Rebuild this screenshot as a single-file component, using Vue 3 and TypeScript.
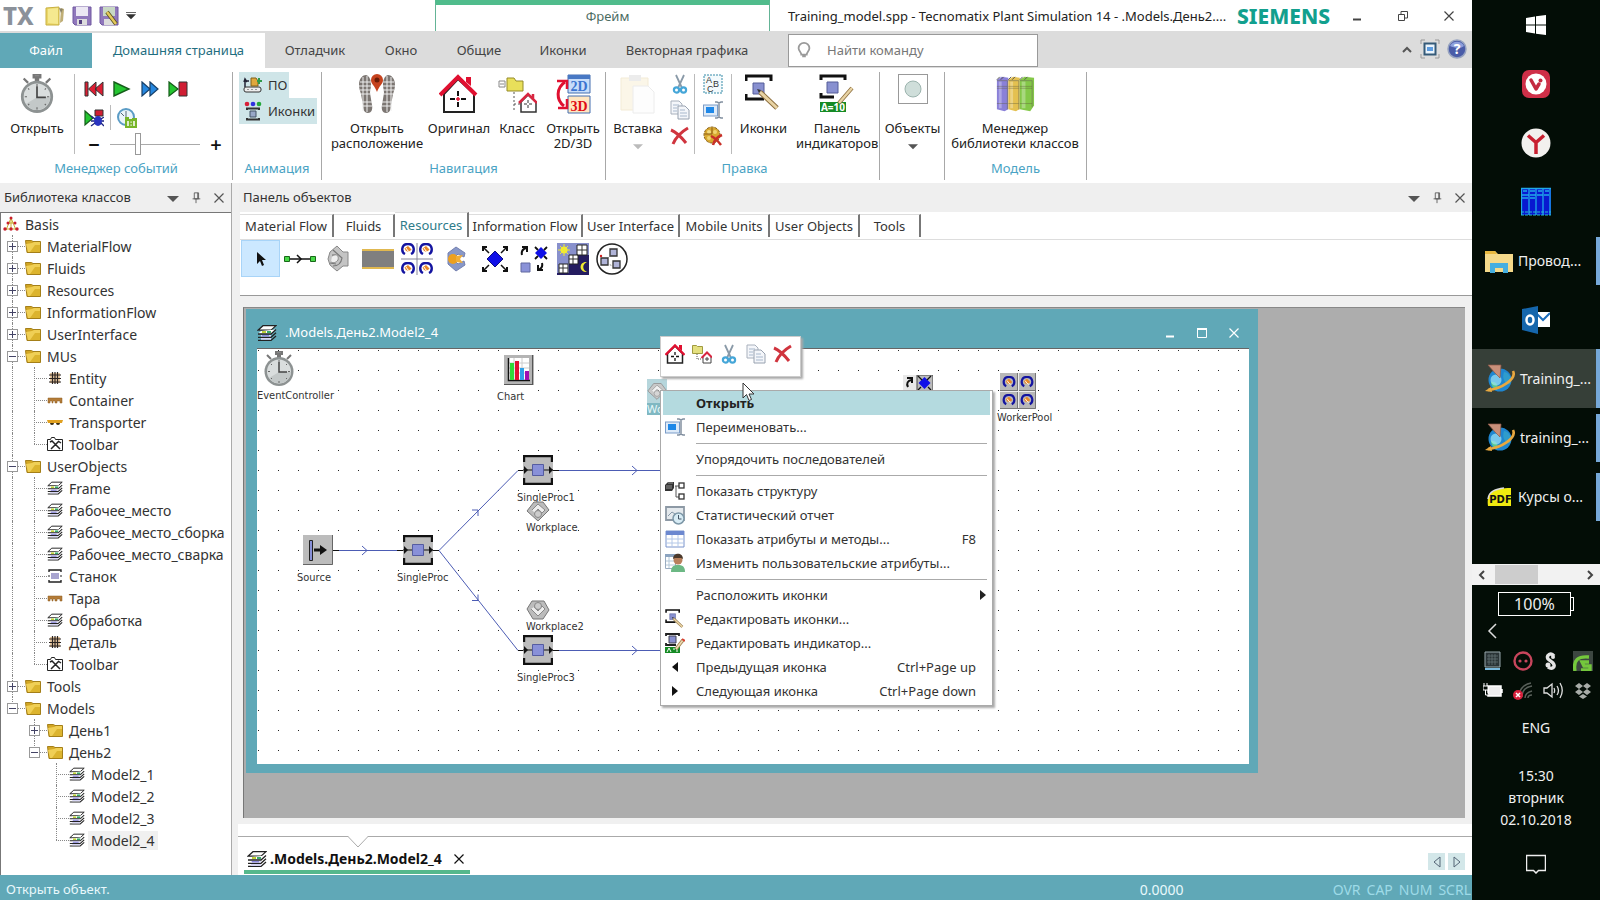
<script setup lang="ts">
import { computed, ref } from 'vue'

interface TreeNode { depth: number; icon: string; label: string; state?: 'open' | 'closed'; selected?: boolean }
interface MenuEntry { label?: string; icon?: string; keys?: string; sub?: boolean; active?: boolean }
interface PlantNode { name: string; icon: string; x: number; y: number; w: number; h: number; lx: number; ly: number }
interface TaskItem { icon: string; size: string; title: string; label?: string; active?: boolean; mark?: boolean }

const ribbonTabs = [
  { label: 'Файл', cls: 'file' },
  { label: 'Домашняя страница', cls: 'home' },
  { label: 'Отладчик', cls: 'w100' },
  { label: 'Окно', cls: 'w72' },
  { label: 'Общие', cls: 'w84' },
  { label: 'Иконки', cls: 'w84' },
  { label: 'Векторная графика', cls: 'w164' },
]

const nodes: TreeNode[] = [
  { depth: 0, icon: 'basis', label: 'Basis' },
  { depth: 1, icon: 'folder', label: 'MaterialFlow', state: 'closed' },
  { depth: 1, icon: 'folder', label: 'Fluids', state: 'closed' },
  { depth: 1, icon: 'folder', label: 'Resources', state: 'closed' },
  { depth: 1, icon: 'folder', label: 'InformationFlow', state: 'closed' },
  { depth: 1, icon: 'folder', label: 'UserInterface', state: 'closed' },
  { depth: 1, icon: 'folder', label: 'MUs', state: 'open' },
  { depth: 2, icon: 'entity', label: 'Entity' },
  { depth: 2, icon: 'container', label: 'Container' },
  { depth: 2, icon: 'transporter', label: 'Transporter' },
  { depth: 2, icon: 'toolbar', label: 'Toolbar' },
  { depth: 1, icon: 'folder', label: 'UserObjects', state: 'open' },
  { depth: 2, icon: 'frame', label: 'Frame' },
  { depth: 2, icon: 'frame', label: 'Рабочее_место' },
  { depth: 2, icon: 'frame', label: 'Рабочее_место_сборка' },
  { depth: 2, icon: 'frame', label: 'Рабочее_место_сварка' },
  { depth: 2, icon: 'station', label: 'Станок' },
  { depth: 2, icon: 'container', label: 'Тара' },
  { depth: 2, icon: 'frame', label: 'Обработка' },
  { depth: 2, icon: 'entity', label: 'Деталь' },
  { depth: 2, icon: 'toolbar', label: 'Toolbar' },
  { depth: 1, icon: 'folder', label: 'Tools', state: 'closed' },
  { depth: 1, icon: 'folder', label: 'Models', state: 'open' },
  { depth: 2, icon: 'folder', label: 'День1', state: 'closed' },
  { depth: 2, icon: 'folder', label: 'День2', state: 'open' },
  { depth: 3, icon: 'frame', label: 'Model2_1' },
  { depth: 3, icon: 'frame', label: 'Model2_2' },
  { depth: 3, icon: 'frame', label: 'Model2_3' },
  { depth: 3, icon: 'frame', label: 'Model2_4', selected: true },
]

// A guide line at a level runs on while a later sibling exists at that level.
function continues(index: number, level: number): boolean {
  for (let i = index + 1; i < nodes.length; i++) {
    if (nodes[i].depth < level) return false
    if (nodes[i].depth === level) return true
  }
  return false
}
const tree = computed(() => nodes.map((n, i) => ({
  ...n,
  cells: Array.from({ length: n.depth }, (_, k) => ({ own: k + 1 === n.depth, through: continues(i, k + 1) })),
})))

const toolTabs = [
  { label: 'Material Flow', cls: 'w94' },
  { label: 'Fluids', cls: 'w60' },
  { label: 'Resources', cls: 'w74 current' },
  { label: 'Information Flow', cls: 'w114' },
  { label: 'User Interface', cls: 'w97' },
  { label: 'Mobile Units', cls: 'w90' },
  { label: 'User Objects', cls: 'w90' },
  { label: 'Tools', cls: 'w60' },
]
const tools = ['pointer', 'connector', 'workplace', 'footpath', 'pool', 'worker', 'exporter', 'transfer', 'shift', 'lockout']

const plant: PlantNode[] = [
  { name: 'EventController', icon: 'watch', x: 6, y: 2, w: 32, h: 36, lx: 0, ly: 40 },
  { name: 'Chart', icon: 'chart', x: 247, y: 6, w: 30, h: 30, lx: 240, ly: 41 },
  { name: 'Source', icon: 'source', x: 46, y: 186, w: 30, h: 30, lx: 40, ly: 222 },
  { name: 'SingleProc', icon: 'proc', x: 146, y: 186, w: 30, h: 30, lx: 140, ly: 222 },
  { name: 'SingleProc1', icon: 'proc', x: 266, y: 106, w: 30, h: 30, lx: 260, ly: 142 },
  { name: 'Workplace', icon: 'wp-down', x: 269, y: 151, w: 24, h: 22, lx: 269, ly: 172 },
  { name: 'Workplace2', icon: 'wp-up', x: 269, y: 250, w: 24, h: 22, lx: 269, ly: 271 },
  { name: 'SingleProc3', icon: 'proc', x: 266, y: 286, w: 30, h: 30, lx: 260, ly: 322 },
  { name: 'WorkerPool', icon: 'poolgray', x: 743, y: 24, w: 36, h: 36, lx: 740, ly: 62 },
]

const menu: MenuEntry[] = [
  { label: 'Открыть', active: true },
  { label: 'Переименовать...', icon: 'rename' },
  {},
  { label: 'Упорядочить последователей' },
  {},
  { label: 'Показать структуру', icon: 'structure' },
  { label: 'Статистический отчет', icon: 'report' },
  { label: 'Показать атрибуты и методы...', icon: 'attrs', keys: 'F8' },
  { label: 'Изменить пользовательские атрибуты...', icon: 'userattrs' },
  {},
  { label: 'Расположить иконки', sub: true },
  { label: 'Редактировать иконки...', icon: 'procpen' },
  { label: 'Редактировать индикатор...', icon: 'panel' },
  { label: 'Предыдущая иконка', icon: 'prev', keys: 'Ctrl+Page up' },
  { label: 'Следующая иконка', icon: 'next', keys: 'Ctrl+Page down' },
]

const tasks: TaskItem[] = [
  { icon: 'win', size: 's20', title: 'Пуск' },
  { icon: 'vivaldi', size: 's28', title: 'Vivaldi' },
  { icon: 'yandex', size: 's30', title: 'Yandex' },
  { icon: 'cabinet', size: 's30', title: 'Total Commander' },
  { icon: 'explorer', size: 's28', title: 'Проводник', label: 'Провод...', mark: true },
  { icon: 'outlook', size: 's28', title: 'Outlook' },
  { icon: 'globe', size: 's30', title: 'Training_model', label: 'Training_...', active: true, mark: true },
  { icon: 'globe', size: 's30', title: 'training_model', label: 'training_...', mark: true },
  { icon: 'pdf', size: 's28', title: 'Курсы', label: 'Курсы о...', mark: true },
]
const tray = ['tray1', 'tray2', 'tray3', 'tray4', 'tray5', 'tray6', 'tray7', 'tray8']

const speed = ref(30)
const query = ref('')
</script>

<template>
  <div class="desktop">
    <svg class="defs" aria-hidden="true">
      <symbol id="watch" viewBox="0 0 32 36">
        <path d="M13 0h6v3h-6zM15 3h2v4h-2zM4 4l4 4M28 4l-4 4" stroke="#777" stroke-width="2" fill="#888" />
        <circle cx="16" cy="20.500" r="14.500" fill="#8d9292" /><circle cx="16" cy="20.500" r="12" fill="#d9dddd" />
        <path d="M6 27A12 12 0 0 0 28 21L16 21z" fill="#c3c8c8" />
        <path d="M16 11v10h8" stroke="#444" stroke-width="1.500" fill="none" />
        <path d="M16 9v2M16 30v2M5 20.500h2M25 20.500h2M8 13l1 1M24 13l-1 1M8 28l1-1M24 28l-1-1" stroke="#666" />
      </symbol>
      <symbol id="new" viewBox="0 0 20 20"><path d="M1 2l13-1v18H1z" fill="#ead668" stroke="#c8b040" /><path d="M3 3l10-1v16L3 17z" fill="#f5e98f" /><path d="M16 2l3 1-1 12-3 2z" fill="#bfae76" /><path d="M14 2l4 1-2 4z" fill="#8b8468" /></symbol>
      <symbol id="save" viewBox="0 0 20 20"><path d="M1 1h18v18H3l-2-2z" fill="#9078bc" stroke="#7058a0" /><path d="M4 1h12v9H4z" fill="#ece8f4" /><path d="M5 13h10v6H5z" fill="#ddd" /><path d="M7 14h3v4H7z" fill="#534080" /></symbol>
      <symbol id="saveas" viewBox="0 0 20 20"><path d="M1 1h18v18H3l-2-2z" fill="#9078bc" stroke="#7058a0" /><path d="M4 1h12v9H4z" fill="#c8d8c4" /><path d="M5 13h10v6H5z" fill="#ddd" /><path d="M8 6l9 12" stroke="#58511c" stroke-width="4" /><path d="M8 6l9 12" stroke="#e4c95b" stroke-width="2.500" /></symbol>
      <symbol id="rew" viewBox="0 0 20 16"><path d="M1 1h3v14H1zM4.500 8L12 1v14zM11 8l8-7v14z" fill="#dc1e33" stroke="#333" /></symbol>
      <symbol id="play" viewBox="0 0 20 16"><path d="M2 1l15 7-15 7z" fill="#24c630" stroke="#155c1a" stroke-width="1.400" /></symbol>
      <symbol id="ff" viewBox="0 0 20 16"><path d="M2 1l8 7-8 7zM10 1l8 7-8 7z" fill="#2687df" stroke="#184068" stroke-width="1.200" /></symbol>
      <symbol id="step" viewBox="0 0 20 16"><path d="M1 1l9 7-9 7z" fill="#24c630" stroke="#155c1a" stroke-width="1.200" /><path d="M11 1h8v14h-8z" fill="#d01e33" stroke="#333" /></symbol>
      <symbol id="bug" viewBox="0 0 20 18"><path d="M1 2l8 7-8 7z" fill="#24c630" stroke="#155c1a" stroke-width="1.200" /><path d="M11 1h8v6h-8z" fill="#d01e33" stroke="#333" /><ellipse cx="14" cy="12" rx="4" ry="5" fill="#2a34c0" /><path d="M7 7l4 3M7 12h3M7 17l4-3M20 8l-3 2M20 12h-2M20 17l-3-3" stroke="#1c2480" stroke-width="1.300" /></symbol>
      <symbol id="realtime" viewBox="0 0 20 20"><circle cx="9" cy="9" r="8" fill="#eaf4fa" stroke="#5b9cc6" stroke-width="2" /><path d="M9 3v6M4 5l3 3" stroke="#567" /><path d="M8 9h4v2h3v-1h5v10H8z" fill="#77b62a" /><path d="M11 13v5M17 13v5" stroke="#fff" stroke-width="1.500" /><path d="M13.500 13.500h1.200v1.200h-1.200zM13.500 16.500h1.200v1.200h-1.200z" fill="#fff" /></symbol>
      <symbol id="anim1" viewBox="0 0 20 16"><rect x="1" y="10" width="17" height="5" rx="2" fill="#eee" stroke="#333" /><path d="M8 1h5l2 3v5H8z" fill="#e0a83c" stroke="#806018" /><path d="M2 10V4h4M1 5l1-3 2 3" stroke="#223" stroke-width="1.500" fill="none" /><path d="M14 4h5M16 1v6" stroke="#2f9a48" stroke-width="2" fill="none" /><path d="M4 12.500h11" stroke="#999" stroke-dasharray="2 2" /></symbol>
      <symbol id="anim2" viewBox="0 0 18 20"><circle cx="3" cy="3" r="2.300" fill="#d81f38" /><circle cx="9" cy="3" r="2.300" fill="#3030e0" /><circle cx="15" cy="3" r="2.300" fill="#22a83a" /><path d="M3 9V7.500h12V9M3 17v1.500h12V17" stroke="#333" stroke-width="2" fill="none" /><path d="M6 10h6v6H6z" fill="#98a8c8" stroke="#456" /></symbol>
      <symbol id="feet" viewBox="0 0 38 40"><path d="M1 11C1 4 5 1 8 1c4 1 5 6 5 10 0 3-1 5-1 8l2 12c1 5-1 8-4 8-4 0-5-4-5-8L3 20C2 17 1 14 1 11zM37 11c0-7-4-10-7-10-4 1-5 6-5 10 0 3 1 5 1 8l-2 12c-1 5 1 8 4 8 4 0 5-4 5-8l2-11c1-3 2-6 2-9z" fill="#7c7672" /><path d="M2 8h12M1 12h12M2 16h11M3 20h10M4 28h10M4 32h10M24 8h12M25 12h12M25 16h11M25 20h10M24 28h10M24 32h10M5 3v34M9 2v36M29 2v36M33 3v34" stroke="#eee" /><path d="M19 18c-2-6-6-8-6-12a6 6 0 0 1 12 0c0 4-4 6-6 12z" fill="#c5421e" /><circle cx="19" cy="6" r="2.500" fill="#6b1d08" /></symbol>
      <symbol id="house" viewBox="0 0 40 40"><path d="M5 20L19 5l16 15v18H5z" fill="#fff" stroke="#222" stroke-width="2" /><path d="M27 3h5v9l-5-4z" fill="#e01030" /><path d="M1 21L19 3l18 18" fill="none" stroke="#e01030" stroke-width="4" /><path d="M19 17v5M19 28v5M11 25h5M22 25h5" stroke="#111" stroke-width="2" /><path d="M17 25h4M19 23v4" stroke="#e01030" stroke-width="1.500" /></symbol>
      <symbol id="house-s" viewBox="0 0 20 20"><path d="M2.500 9.500L10 2l7.500 7.500V19h-15z" fill="#fff" stroke="#222" stroke-width="1.500" /><path d="M14 1h3v6l-3-3z" fill="#e01030" /><path d="M.500 11L10 1.500l9.500 9.500" fill="none" stroke="#e01030" stroke-width="2.400" /><path d="M10 8v3M10 14v3M6 12.500h3M11 12.500h3" stroke="#111" stroke-width="1.300" /></symbol>
      <symbol id="class" viewBox="0 0 40 40"><path d="M10 4h7l2 3h7v10H10z" fill="#e8df5a" stroke="#958b28" /><path d="M2 7h6v6H2zM3 10h4" fill="#fff" stroke="#888" /><path d="M17 18v20M17 30h6" stroke="#555" stroke-dasharray="2 2" /><path d="M24 28l7-7 8 7v10H24z" fill="#fff" stroke="#333" stroke-width="1.500" /><path d="M22 29l9-9 9 9M36 20v6" fill="none" stroke="#d82640" stroke-width="2.500" /><path d="M31 26v8M27 30h8" stroke="#333" stroke-dasharray="3 2" /></symbol>
      <symbol id="class-s" viewBox="0 0 20 20"><path d="M.500 1.500h4l1 1h5v7H.500z" fill="#e4e080" stroke="#a09a40" /><path d="M5 10v5h5" fill="none" stroke="#555" stroke-dasharray="1 1" /><path d="M11 13l4-4 4 4v6h-8z" fill="#fff" stroke="#444" /><path d="M9.500 14L15 8.500l5 5" fill="none" stroke="#d82640" stroke-width="2" /><path d="M15 13v4M13 15h4" stroke="#444" /></symbol>
      <symbol id="d23" viewBox="0 0 36 40"><path d="M13 1h22v18H13z" fill="#c8ddfa" stroke="#456eb0" /><path d="M13 1h22v4H13zM13 22h22v4H13z" fill="#4878c4" /><path d="M13 22h22v17H13z" fill="#ffe6c0" stroke="#456eb0" /><text x="24" y="17" font-size="14" font-weight="bold" text-anchor="middle" fill="#3c74d0" font-family="Liberation Serif">2D</text><text x="24" y="37" font-size="14" font-weight="bold" text-anchor="middle" fill="#e00c14" font-family="Liberation Serif">3D</text><path d="M10 8C1 14 1 26 9 32" fill="none" stroke="#e01030" stroke-width="3" /><path d="M2 7h10v8M3 34h9v-9" fill="none" stroke="#e01030" stroke-width="2.500" /></symbol>
      <symbol id="paste" viewBox="0 0 36 40"><path d="M1 4h27v32H1z" fill="#fbf6e8" stroke="#f3ebd6" /><path d="M9 1h12v6H9z" fill="#ececec" /><path d="M13 12h15l6 6v21H13z" fill="#fdfdfd" stroke="#ececec" /></symbol>
      <symbol id="cut" viewBox="0 0 16 20"><path d="M4 1l6 13M12 1L6 14" stroke="#8a9aa8" stroke-width="1.800" fill="none" /><circle cx="4.500" cy="16" r="2.600" fill="none" stroke="#45a6d8" stroke-width="2.200" /><circle cx="11.500" cy="16" r="2.600" fill="none" stroke="#45a6d8" stroke-width="2.200" /></symbol>
      <symbol id="copy" viewBox="0 0 20 20"><path d="M1 1h8l3 3v10H1z" fill="#f4f6fa" stroke="#a8b0bc" /><path d="M8 6h7l4 4v9H8z" fill="#f4f6fa" stroke="#98a2b0" /><path d="M3 5h6M3 8h4M3 11h4M10 10h5M10 13h7M10 16h7" stroke="#a8b8cc" /></symbol>
      <symbol id="del" viewBox="0 0 20 18"><path d="M1 3c5 2 11 8 15 13M18 1C11 5 6 10 3 17" fill="none" stroke="#d0343e" stroke-width="3" /></symbol>
      <symbol id="ab" viewBox="0 0 20 20"><rect x="1" y="1" width="18" height="18" fill="#f4fafc" stroke="#368ba8" stroke-dasharray="2 1" /><text x="3" y="9" font-size="9" fill="#333" font-family="Liberation Sans">A</text><text x="10" y="13" font-size="9" fill="#333" font-family="Liberation Sans">B</text><text x="4" y="18" font-size="9" fill="#333" font-family="Liberation Sans">C</text></symbol>
      <symbol id="rename" viewBox="0 0 20 18"><rect x="0.500" y="4" width="14" height="11" fill="#ddeaf8" stroke="#7a9cc8" /><rect x="3" y="6" width="8" height="6" fill="#1e88e8" /><path d="M12 1h2l2 1 2-1h2M16 2v14M12 17h2l2-1 2 1h2" fill="none" stroke="#8290a0" stroke-width="1.500" /></symbol>
      <symbol id="cookie" viewBox="0 0 20 20"><circle cx="9" cy="9" r="8" fill="#d8a830" stroke="#886018" stroke-dasharray="3 1" /><circle cx="6" cy="6" r="2" fill="#f3dc82" /><circle cx="12" cy="6" r="2" fill="#f0d470" /><circle cx="6" cy="12" r="2" fill="#f0d470" /><path d="M9 2v6H2" fill="none" stroke="#8a5c18" /><path d="M8 10c4 2 7 5 10 9M19 9c-5 2-8 6-9 10" fill="none" stroke="#c83028" stroke-width="2.500" /></symbol>
      <symbol id="procpen" viewBox="0 0 36 38"><path d="M1 7V2h25v5M1 20v5h18" fill="none" stroke="#111" stroke-width="3" /><path d="M8 9h11v11H8z" fill="#8890d0" stroke="#555c98" /><path d="M15 18l17 16" stroke="#8a6c3c" stroke-width="5" /><path d="M15 18l17 16" stroke="#e8d3a4" stroke-width="3" /><path d="M12 15l4 1-2 3z" fill="#333" /></symbol>
      <symbol id="panel" viewBox="0 0 36 38"><path d="M2 6V2h24v4M2 19v4h13" fill="none" stroke="#111" stroke-width="3" /><path d="M8 8h11v11H8z" fill="#8890d0" stroke="#555c98" /><path d="M1 28h26v10H1z" fill="#158a24" /><text x="14" y="37" font-size="10" font-weight="bold" text-anchor="middle" fill="#fff" font-family="Noto Sans">A=10</text><path d="M33 14L20 29" stroke="#8a6c3c" stroke-width="4" /><path d="M33 14L20 29" stroke="#e8d3a4" stroke-width="2.500" /></symbol>
      <symbol id="panel-s" viewBox="0 0 20 20"><path d="M1 3V1h13v2M1 10v2h10" fill="none" stroke="#222" stroke-width="1.800" /><path d="M4 3h7v7H4z" fill="#8890d0" stroke="#445" /><path d="M0 14h15v6H0z" fill="#158a24" /><path d="M2 19l2-4 2 4M8 16h2M12 15v4" fill="none" stroke="#fff" /><path d="M18 7l-7 9" stroke="#a08050" stroke-width="3.500" /><path d="M18 7l-7 9" stroke="#ecd8b0" stroke-width="1.800" /><path d="M17 6l3 2" stroke="#d84030" stroke-width="2" /></symbol>
      <symbol id="objects" viewBox="0 0 30 30"><rect x="0.500" y="0.500" width="29" height="29" fill="#fff" stroke="#999" /><circle cx="15" cy="15" r="8" fill="#cfdeda" stroke="#9cb4ae" /></symbol>
      <symbol id="books" viewBox="0 0 42 38"><path d="M2 4l5-3 7 1v33l-4 2-8-2z" fill="#8a80d8" /><path d="M14 4l5-3 7 1v33l-4 2-8-2z" fill="#e4c050" /><path d="M26 4l5-3 10 1v29l-4 6-11-2z" fill="#84c848" /><path d="M4 6h3v28H4zM16 6h3v28h-3zM28 6h4v28h-4z" fill="#fff" fill-opacity=".3" /><path d="M2 4l3-3M6 4l3-3M14 4l3-3M18 4l3-3M26 4l3-3M31 4l3-3" stroke="#555" /><path d="M2 5h11v30M14 5h11v30M26 5h13v28" fill="none" stroke="#6d6d58" stroke-opacity=".6" /><path d="M2 11h11M2 29h11M14 11h11M14 29h11M26 11h13M26 29h13M2 13h11M14 13h11M26 13h13" stroke="#5c5a38" stroke-opacity=".4" /></symbol>
      <symbol id="folder" viewBox="0 0 16 14"><path d="M.500 1.500h6l1.500 1h7.500v11H2z" fill="#d2a624" stroke="#a47f18" /><path d="M1 5l6-1 2-1h6v10H3z" fill="#f0cf55" /><path d="M10 6h5v7H5z" fill="#dcb42e" /></symbol>
      <symbol id="basis" viewBox="0 0 16 16"><path d="M8 2L3 14M8 2l5 12M8 2v12M8 7H5M8 7h5M3 13h10" stroke="#c8b030" fill="none" /><g fill="#c81e2c"><circle cx="8" cy="2" r="1.500" /><circle cx="5" cy="7" r="1.500" /><circle cx="12" cy="7" r="1.500" /><circle cx="2" cy="13" r="1.700" /><circle cx="8" cy="13" r="1.700" /><circle cx="14" cy="13" r="1.700" /></g></symbol>
      <symbol id="entity" viewBox="0 0 16 16"><path d="M3 3h10v10H3z" fill="#e8c8a0" /><path d="M5.500 2v12M10.500 2v12M8 2v12M2 5h12M2 8.500h12M2 12h12" stroke="#2c2420" stroke-width="1.200" /></symbol>
      <symbol id="container" viewBox="0 0 16 16"><path d="M1 6h14v5h-2V9h-3v2H8V9H6v2H5V9H3v2H1z" fill="#b47c38" stroke="#8c5c20" stroke-width=".500" /></symbol>
      <symbol id="transporter" viewBox="0 0 16 16"><path d="M0 6h16l-1 3H1z" fill="#e0a020" /><path d="M3 9a2 2 0 0 0 4 0zM9 9a2 2 0 0 0 4 0z" fill="#3a2c10" /></symbol>
      <symbol id="toolbar" viewBox="0 0 16 16"><path d="M.500 3.500h3l1-2h3l1 2h7v11H.500z" fill="#fff" stroke="#222" /><path d="M3 6l2-1 2 2 6 6M12 5l-3 3-5 5M11 5l3 2" fill="none" stroke="#222" stroke-width="1.500" /></symbol>
      <symbol id="frame" viewBox="0 0 20 16"><path d="M6 .700h13l-5 4.500H1z" fill="#fff" stroke="#222" stroke-width="1.200" /><path d="M4 6l-3 3h13l5-4.500z" fill="#fff" /><path d="M1 9h13l5-4.500M1 12.300h13l5-4.500M1 15.400h13l5-4.500" fill="none" stroke="#222" stroke-width="1.300" /><path d="M5 7h4" stroke="#b8cc22" stroke-width="1.800" /><path d="M10 7h4" stroke="#23a05a" stroke-width="1.800" /><path d="M4 10.700h10M4 13.900h10" stroke="#d8d6f4" stroke-width="1.600" /><path d="M5 10.800h7" stroke="#6b64d0" /></symbol>
      <symbol id="station" viewBox="0 0 16 16"><path d="M2 4V2h12v2M2 12v2h12v-2" fill="none" stroke="#222" stroke-width="1.400" /><path d="M4 5h8v6H4z" fill="#a8a4d0" /><path d="M1 8h2M13 8h2" stroke="#222" /></symbol>

      <symbol id="pointer" viewBox="0 0 32 32"><path d="M12 9v12l3-3 2 5 2-1-2-5h4z" fill="#111" /></symbol>
      <symbol id="connector" viewBox="0 0 32 32"><path d="M5 16h22" stroke="#111" stroke-width="1.500" /><path d="M13 12l4 4-4 4" fill="none" stroke="#111" stroke-width="1.500" /><path d="M.500 13.500h5v5h-5zM26.500 13.500h5v5h-5z" fill="#48d848" stroke="#186818" /></symbol>
      <symbol id="workplace" viewBox="0 0 32 32"><path d="M7 9l7-6 6 6h5v14h-5l-6 5-7-6-2-6z" fill="#c4c4c4" stroke="#888" /><path d="M10 7l9 8c-1 6-4 8-9 8M7 20l6 1M9 12h4" fill="none" stroke="#777" stroke-width="1.200" /><path d="M9 13c5-3 7 0 6 4-2 3-5 3-7 2" fill="#eee" stroke="#888" /></symbol>
      <symbol id="footpath" viewBox="0 0 32 32"><path d="M0 7h32v19H0z" fill="#7f7f7f" /><path d="M0 6h32v2H0zM0 24h32v2H0z" fill="#e0b850" /></symbol>
      <symbol id="man" viewBox="0 0 14 13"><path d="M4 11C0 9 0 1 7 1s7 8 3 10" fill="none" stroke="#1414a0" stroke-width="2.400" /><path d="M7 3l3.500 3.500L8 9 5 8 3.500 5.500z" fill="#e88828" /><path d="M5 5l2 3 2 1" fill="none" stroke="#fff" /></symbol>
      <symbol id="pool" viewBox="0 0 32 32"><path d="M16 0v32M0 16h32" stroke="#889" /><use href="#man" x="0" y="0" width="14" height="13" /><use href="#man" x="18" y="0" width="14" height="13" /><use href="#man" x="0" y="19" width="14" height="13" /><use href="#man" x="18" y="19" width="14" height="13" /></symbol>
      <symbol id="worker" viewBox="0 0 32 32"><path d="M8 10l8-6 9 6-1 4-6-3-5 5 5 5 6-3 1 4-9 6-8-7z" fill="#8898c8" stroke="#7480b0" /><circle cx="13" cy="16" r="5" fill="#eca020" /><path d="M16 13l7-1-3 4 3 4-7-1z" fill="#f0ae38" /></symbol>
      <symbol id="exporter" viewBox="0 0 32 32"><path d="M16 8l8 8-8 8-8-8z" fill="#1010e8" stroke="#101080" /><path d="M5 5l5 5M27 5l-5 5M5 27l5-5M27 27l-5-5" stroke="#111" stroke-width="1.500" /><path d="M4 8V4h4M24 4h4v4M4 24v4h4M28 24v4h-4" fill="none" stroke="#111" stroke-width="2" /></symbol>
      <symbol id="transfer" viewBox="0 0 32 32"><path d="M23 4l6 6-6 6-6-6z" fill="#1010e8" /><path d="M17 4l3 3M29 4l-3 3M17 16l3-3M29 16l-3-3" stroke="#111" stroke-width="1.800" /><path d="M4 12c-1-4 1-6 4-7M4 4h5v5M24 20c1 4-1 6-4 7M25 27h-5v-5" fill="none" stroke="#111" stroke-width="2" /><path d="M3 20h9v9H3z" fill="#8a92d8" stroke="#6068a0" /></symbol>
      <symbol id="shift" viewBox="0 0 32 32"><path d="M0 0h32v32H0z" fill="#8890cc" /><path d="M0 32V30h12V20h9V12h11v20z" fill="#241c60" /><path d="M20 2h10v10H20zM12 12h9v9h-9zM2 21h9v9H2z" fill="#fff" stroke="#222" /><path d="M25 2v10M20 7h10M16 12v9M12 16h9M6 21v9M2 25h9" stroke="#333" /><circle cx="7" cy="7" r="3.500" fill="#f0ea30" /><path d="M7 1v12M1 7h12M3 3l8 8M11 3l-8 8" stroke="#f0ea30" /><path d="M30 19c-8-1-9 10 0 10-5-2-5-8 0-10z" fill="#f0ea30" /></symbol>
      <symbol id="lockout" viewBox="0 0 32 32"><circle cx="16" cy="16" r="15" fill="#fff" stroke="#222" stroke-width="1.500" /><path d="M14 6h7v7h-7zM5 15h7v7H5zM17 18h7v7h-7z" fill="#b0b4d8" stroke="#333" stroke-width="1.300" /><path d="M12 15l3-3M12 21l5 2" stroke="#777" stroke-dasharray="1 1" /><circle cx="5" cy="13" r="1.200" fill="#d02020" /></symbol>

      <symbol id="chart" viewBox="0 0 30 30"><path d="M0 0h30v30H0z" fill="#b4b4b4" /><path d="M29 0v30H0v-1h28V0z" fill="#555" /><path d="M4 3h21v23H4z" fill="#fff" /><path d="M4 8h21M4 13h21M4 18h21M10 3v22M18 3v22" stroke="#ccc" /><path d="M4.500 3v22.500H26" stroke="#111" stroke-width="1.500" fill="none" /><path d="M6 8h4v17H6z" fill="#30d838" /><path d="M11 6h4v19h-4z" fill="#e01030" /><path d="M16 13h4v12h-4z" fill="#30a0e8" /><path d="M21 16h4v9h-4z" fill="#a010b0" /></symbol>
      <symbol id="source" viewBox="0 0 30 30"><path d="M0 0h30v30H0z" fill="#bcbcbc" /><path d="M29.500 0v29.500H0" fill="none" stroke="#666" /><path d="M6.500 5.500h3v20h-3z" fill="#8890d8" stroke="#222" /><path d="M11 15h8" stroke="#111" stroke-width="3" /><path d="M17 10l7 5-7 5z" fill="#111" /></symbol>
      <symbol id="proc" viewBox="0 0 30 30"><path d="M0 0h30v30H0z" fill="#bcbcbc" /><path d="M1 7V1h28v6M1 23v6h28v-6" fill="none" stroke="#111" stroke-width="2.400" /><path d="M0 15h30" stroke="#111" /><path d="M9.500 9.500h11v11h-11z" fill="#8890d8" stroke="#555ca0" /><path d="M1 11l4 4-4 4zM26 11l4 4-4 4z" fill="#111" /></symbol>
      <symbol id="wp-down" viewBox="0 0 24 22"><path d="M8 2h9l6 8-11 11L1 11z" fill="#bcbcbc" stroke="#777" /><path d="M6 10l6-6 7 6-3 3-4-4-3 4" fill="#eee" stroke="#888" /><circle cx="12" cy="14" r="3.500" fill="#ccc" stroke="#888" /></symbol>
      <symbol id="wp-up" viewBox="0 0 24 22"><path d="M7 20h10l6-9-5-9H6L1 10z" fill="#bcbcbc" stroke="#777" /><path d="M5 10l7 7 7-7-3-3-4 5-4-4" fill="#eee" stroke="#888" /><circle cx="12" cy="7" r="3.500" fill="#ccc" stroke="#888" /></symbol>
      <symbol id="poolgray" viewBox="0 0 36 36"><path d="M0 0h36v36H0z" fill="#b8b8b8" /><path d="M35.500 0v35.500H0M17.500 0v36M0 17.500h36" fill="none" stroke="#777" /><path d="M0 18.500h35M18.500 0v35" stroke="#eee" /><use href="#man" x="2" y="3" width="14" height="12" /><use href="#man" x="20" y="3" width="14" height="12" /><use href="#man" x="2" y="21" width="14" height="12" /><use href="#man" x="20" y="21" width="14" height="12" /></symbol>
      <symbol id="transgray" viewBox="0 0 30 30"><path d="M0 0h30v30H0z" fill="#e8e8e8" /><path d="M14 0h16v16H14z" fill="#bbb" stroke="#444" /><path d="M5 12c-2-4 0-6 3-7M4 3h5v5" fill="none" stroke="#111" stroke-width="2" /><path d="M21.500 2l6 6-6 6-6-6z" fill="#1010e8" /><path d="M15 1l4 4M28 1l-4 4M15 15l3-3M28 15l-3-3" stroke="#111" stroke-width="1.300" /></symbol>
      <symbol id="structure" viewBox="0 0 20 20"><path d="M0 4l3-3h6v6l-2 3H0z" fill="#333" /><path d="M1 5h6M1 7h6M3 2h5" stroke="#bbb" stroke-width=".700" /><path d="M10 5h4M11 5v11h3" fill="none" stroke="#555" /><rect x="14" y="2" width="5" height="5" fill="#fff" stroke="#333" stroke-width="1.300" /><rect x="14" y="13" width="5" height="5" fill="#fff" stroke="#333" stroke-width="1.300" /></symbol>
      <symbol id="report" viewBox="0 0 20 20"><path d="M1 2h18v13H1z" fill="#e4e9ed" stroke="#8d99a5" stroke-width="1.800" /><path d="M3 11l4-4 3 2" fill="none" stroke="#8798a8" /><circle cx="13.500" cy="13.500" r="5.500" fill="#d8ecf5" stroke="#7e98a8" stroke-width="1.500" /><path d="M13.500 10v4h3" fill="none" stroke="#456" /></symbol>
      <symbol id="attrs" viewBox="0 0 20 18"><path d="M1 1h18v16H1z" fill="#fff" stroke="#7a94cc" /><path d="M1 1h18v4H1z" fill="#6c88d0" /><path d="M1 9h18M1 13h18M7 5v12M13 5v12" stroke="#b4c8e8" /></symbol>
      <symbol id="userattrs" viewBox="0 0 20 20"><path d="M.500 1.500h10v14H.500z" fill="#fff" stroke="#9aacc0" /><path d="M0 1h11v3H0z" fill="#8ca4c0" /><path d="M1 8h9M1 12h9M4 4v11" stroke="#b4c8d8" /><circle cx="13" cy="7" r="4.500" fill="#b9805c" /><path d="M8 6c0-7 10-7 10 0l-2-1h-6z" fill="#4c3a2c" /><path d="M6 19c0-6 3-7 7-7s7 1 7 7z" fill="#6cb884" /></symbol>
      <symbol id="prev" viewBox="0 0 20 18"><path d="M13 4v10L7 9z" fill="#111" /></symbol>
      <symbol id="next" viewBox="0 0 20 18"><path d="M7 4v10l6-5z" fill="#111" /></symbol>

      <symbol id="x" viewBox="0 0 12 12"><path d="M1.500 1.500l9 9M10.500 1.500l-9 9" stroke="currentColor" stroke-width="1.200" /></symbol>
      <symbol id="min" viewBox="0 0 12 12"><path d="M2 9.500h8" stroke="currentColor" stroke-width="2" /></symbol>
      <symbol id="max" viewBox="0 0 12 12"><path d="M1.500 1.500h9v9h-9z" fill="none" stroke="currentColor" /><path d="M1 2h10" stroke="currentColor" stroke-width="2" /></symbol>
      <symbol id="restore" viewBox="0 0 12 12"><path d="M1.500 4.500h6v6h-6zM4 4V1.500h6.500V8H8" fill="none" stroke="currentColor" /></symbol>
      <symbol id="pin" viewBox="0 0 12 14"><path d="M4 1h5v7H4zM2 8h9M6 8v5M8 1v7" fill="none" stroke="currentColor" /></symbol>
      <symbol id="tri" viewBox="0 0 12 12"><path d="M0 4h12l-6 6z" fill="currentColor" /></symbol>
      <symbol id="bulb" viewBox="0 0 16 20"><path d="M5 14c0-3-3-4-3-7a6 6 0 0 1 12 0c0 3-3 4-3 7zM6 16h4" fill="none" stroke="#9a9a9a" stroke-width="2" /></symbol>
      <symbol id="help" viewBox="0 0 20 20"><circle cx="10" cy="10" r="9" fill="#4a5ca8" stroke="#98a4c0" stroke-width="1.500" /><path d="M3 7a8 8 0 0 1 14 0c-3 3-10 2-14 0z" fill="#8ea0dc" /><text x="10" y="15" font-size="14" font-weight="bold" text-anchor="middle" fill="#fff" font-family="Noto Sans">?</text></symbol>
      <symbol id="full" viewBox="0 0 20 20"><path d="M1 5V1h4M15 1h4v4M1 15v4h4M19 15v4h-4" fill="none" stroke="#999" /><rect x="4.500" y="4.500" width="11" height="11" fill="#eaf4fc" stroke="#345a78" stroke-width="2" /><path d="M7 8h6v4H7z" fill="#5c9ce0" /></symbol>

      <symbol id="win" viewBox="0 0 20 20"><path d="M0 3l9-1.500V9.500H0zM10 1.300L20 0v9.500H10zM0 10.500h9v8L0 17zM10 10.500h10V20l-10-1.300z" fill="#fff" /></symbol>
      <symbol id="vivaldi" viewBox="0 0 28 28"><rect width="28" height="28" rx="7" fill="#cf2f48" /><circle cx="14" cy="14" r="10.500" fill="#fff" /><path d="M9 10l5 9 3-5" fill="none" stroke="#c42a40" stroke-width="3.500" stroke-linecap="round" stroke-linejoin="round" /><circle cx="18.500" cy="10.500" r="2" fill="#c42a40" /></symbol>
      <symbol id="yandex" viewBox="0 0 30 30"><circle cx="15" cy="15" r="14.500" fill="#f2f0ee" /><path d="M7 7.500l8 7 8-7M15 14v12" fill="none" stroke="#c81f30" stroke-width="3.500" /></symbol>
      <symbol id="cabinet" viewBox="0 0 30 30"><path d="M0 1h30v27H0z" fill="#0818d0" /><path d="M.500 1v27M8 1v27M15 1v27M22 1v27M29 1v27M0 1.500h30M2 4h4M9 4h5M17 4h4M24 4h4M1 8h7M9 8h6M16 8h6M23 8h5M1 11h6M9 11h5" stroke="#20a8e8" stroke-width="1.300" /><path d="M0 25h30M0 28h30" stroke="#28bccc" stroke-dasharray="3 1" /></symbol>
      <symbol id="explorer" viewBox="0 0 28 28"><path d="M0 4h10l3 3h15v18H0z" fill="#f5d98a" /><path d="M0 4h10l2 3H0z" fill="#e8b840" /><path d="M5 16h18v10h-5v-5h-8v5H5z" fill="#45aee0" /></symbol>
      <symbol id="outlook" viewBox="0 0 28 28"><path d="M15 6h13v15H15z" fill="#fff" /><path d="M15 8l6 6 7-7" fill="none" stroke="#1c6ebc" stroke-width="2" /><path d="M0 3l16-3v28L0 24z" fill="#1566ac" /><ellipse cx="8" cy="14" rx="3.500" ry="4.500" fill="none" stroke="#fff" stroke-width="2.500" /></symbol>
      <symbol id="globe" viewBox="0 0 30 30"><circle cx="15" cy="16" r="11.500" fill="#1f86d0" /><path d="M19 8c6 1 8 7 6 12-3 1-9-4-6-12z" fill="#2f9ccc" /><path d="M6 18c4-1 8 2 6 8-3-1-6-4-6-8z" fill="#58c890" /><circle cx="11" cy="16" r="5.500" fill="#a0e4f8" fill-opacity=".7" /><path d="M3 1h13l-1 13-5-5z" fill="#c8907a" stroke="#8c5848" stroke-width=".700" /><path d="M28 7c4 8-12 18-25 19" fill="none" stroke="#e8a840" stroke-width="2.600" /><path d="M0 27l6-4 1 5z" fill="#e8a840" /></symbol>
      <symbol id="pdf" viewBox="0 0 28 28"><path d="M3 23C1 10 8 5 26 5v18z" fill="#f0ea10" /><path d="M3 16c1-8 8-10 16-11" fill="none" stroke="#ddd" stroke-width="1.500" /><text x="15.500" y="20" font-size="10" font-weight="bold" text-anchor="middle" fill="#111" font-family="DejaVu Sans">PDF</text></symbol>
      <symbol id="tray1" viewBox="0 0 20 20"><path d="M2 1h15v15H2z" fill="#2a3436" stroke="#98a8ac" /><path d="M2 18h15" stroke="#78b8dc" stroke-width="2" /><path d="M4 5h11M4 8h11M4 11h11M6 3v11M9 3v11M12 3v11" stroke="#69787a" stroke-width=".700" /></symbol>
      <symbol id="tray2" viewBox="0 0 20 20"><circle cx="10" cy="10" r="8.500" fill="none" stroke="#c8455c" stroke-width="2.400" /><circle cx="7" cy="10" r="1.600" fill="#c8455c" /><circle cx="13" cy="10" r="1.600" fill="#c8455c" /></symbol>
      <symbol id="tray3" viewBox="0 0 20 20"><path d="M11 5c-3-4-8-1-6 3l5 4c3 4-1 7-5 4" fill="none" stroke="#e4e4e4" stroke-width="3.400" /><circle cx="5" cy="14" r="2.500" fill="#e4e4e4" /><circle cx="10" cy="6" r="2" fill="#e4e4e4" /></symbol>
      <symbol id="tray4" viewBox="0 0 20 20"><path d="M0 0h20v20H0z" fill="#3c4640" /><path d="M2 20C0 9 5 5 16 6M16 11H9l2 4h6v5M8 19h9" fill="none" stroke="#74c83c" stroke-width="3.400" /></symbol>
      <symbol id="tray5" viewBox="0 0 20 20"><path d="M5 5h13v10H5zM19 8v4" fill="#eee" stroke="#fff" stroke-width="1.500" /><path d="M0 5h5v4H0zM1 2v3M4 2v3M2.500 9v5h3" fill="#020a04" stroke="#fff" /></symbol>
      <symbol id="tray6" viewBox="0 0 20 20"><path d="M9 16C9 10 13 6 19 5M12 17c0-4 3-6 7-7M15 17c0-2 1-3 4-3M6 13C8 6 12 3 18 2" fill="none" stroke="#59605a" stroke-width="1.500" /><circle cx="5" cy="14" r="5" fill="#d8203c" /><path d="M3 12l4 4M7 12l-4 4" stroke="#fff" stroke-width="1.500" /></symbol>
      <symbol id="tray7" viewBox="0 0 20 20"><path d="M1 7h3l5-4v13l-5-4H1z" fill="none" stroke="#e0e0e0" stroke-width="1.300" /><path d="M11 7c1 2 1 3 0 5M14 5c2 3 2 6 0 9M17 2c3 5 3 10 0 15" fill="none" stroke="#e0e0e0" stroke-width="1.300" /></symbol>
      <symbol id="tray8" viewBox="0 0 20 20"><path d="M6 2l4 3-4 3-4-3zM14 2l4 3-4 3-4-3zM6 8l4 3-4 3-4-3zM14 8l4 3-4 3-4-3zM10 13l4 2.500-4 2.500-4-2.500z" fill="#a8aca8" /></symbol>
    </svg>

    <div class="app">
      <header class="titlebar">
        <div class="quick">
          <span class="tx">TX</span>
          <button aria-label="Создать"><svg class="s20"><use href="#new" /></svg></button>
          <button aria-label="Сохранить"><svg class="s20"><use href="#save" /></svg></button>
          <button aria-label="Сохранить как"><svg class="s20"><use href="#saveas" /></svg></button>
          <button class="customize" aria-label="Настройка панели"><svg class="s10"><use href="#tri" /></svg></button>
        </div>
        <div class="context-tab">Фрейм</div>
        <h1>Training_model.spp - Tecnomatix Plant Simulation 14 - .Models.День2....</h1>
        <span class="brand">SIEMENS</span>
        <div class="winbtns">
          <button aria-label="Свернуть"><svg class="s12"><use href="#min" /></svg></button>
          <button aria-label="Восстановить"><svg class="s12"><use href="#restore" /></svg></button>
          <button aria-label="Закрыть"><svg class="s12"><use href="#x" /></svg></button>
        </div>
      </header>

      <nav class="ribbon-tabs">
        <button v-for="t in ribbonTabs" :key="t.label" :class="t.cls">{{ t.label }}</button>
        <label class="search"><svg class="bulb"><use href="#bulb" /></svg><input v-model="query" type="text" placeholder="Найти команду" aria-label="Найти команду" /></label>
        <div class="ribbon-side">
          <button aria-label="Свернуть ленту"><svg class="s12" viewBox="0 0 12 12"><path d="M2 9l4-4 4 4" fill="none" stroke="#555" stroke-width="2" /></svg></button>
          <button aria-label="Полный экран"><svg class="s20"><use href="#full" /></svg></button>
          <button aria-label="Справка"><svg class="s20"><use href="#help" /></svg></button>
        </div>
      </nav>

      <section class="ribbon">
        <div class="group g-events">
          <div class="body">
            <button class="big w74"><svg class="watch"><use href="#watch" /></svg><span>Открыть</span></button>
            <i class="vline"></i>
            <div class="player">
              <div class="prow">
                <button v-for="p in ['rew', 'play', 'ff', 'step']" :key="p" :aria-label="p"><svg class="pic"><use :href="'#' + p" /></svg></button>
              </div>
              <div class="prow">
                <button aria-label="Отладка"><svg class="s20"><use href="#bug" /></svg></button>
                <i class="vshort"></i>
                <button aria-label="Реальное время"><svg class="s20"><use href="#realtime" /></svg></button>
              </div>
              <div class="slider">
                <button aria-label="Медленнее">−</button>
                <input v-model="speed" type="range" min="0" max="100" aria-label="Скорость" />
                <button aria-label="Быстрее">+</button>
              </div>
            </div>
          </div>
          <h2>Менеджер событий</h2>
        </div>
        <div class="group g-anim">
          <div class="body stack">
            <button class="toggle"><svg class="pic"><use href="#anim1" /></svg>ПО</button>
            <button class="toggle"><svg class="s20"><use href="#anim2" /></svg>Иконки</button>
          </div>
          <h2>Анимация</h2>
        </div>
        <div class="group g-nav">
          <div class="body">
            <button class="big w104"><svg class="s40"><use href="#feet" /></svg><span>Открыть<br />расположение</span></button>
            <button class="big w60"><svg class="s40"><use href="#house" /></svg><span>Оригинал</span></button>
            <button class="big w56"><svg class="s40"><use href="#class" /></svg><span>Класс</span></button>
            <button class="big w56"><svg class="s40"><use href="#d23" /></svg><span>Открыть<br />2D/3D</span></button>
          </div>
          <h2>Навигация</h2>
        </div>
        <div class="group g-edit">
          <div class="body">
            <button class="big w56"><svg class="s40"><use href="#paste" /></svg><span>Вставка</span><svg class="drop pale"><use href="#tri" /></svg></button>
            <div class="minis">
              <button aria-label="Вырезать"><svg class="s20"><use href="#cut" /></svg></button>
              <button aria-label="Копировать"><svg class="s20"><use href="#copy" /></svg></button>
              <button aria-label="Удалить"><svg class="s20"><use href="#del" /></svg></button>
            </div>
            <i class="vline"></i>
            <div class="minis wide">
              <button aria-label="Выделить всё"><svg class="s20"><use href="#ab" /></svg></button>
              <button aria-label="Переименовать"><svg class="s20"><use href="#rename" /></svg></button>
              <button aria-label="Удалить движимые"><svg class="s20"><use href="#cookie" /></svg></button>
            </div>
            <i class="vline"></i>
            <button class="big w64"><svg class="s36"><use href="#procpen" /></svg><span>Иконки</span></button>
            <button class="big w84"><svg class="s36"><use href="#panel" /></svg><span>Панель<br />индикаторов</span></button>
          </div>
          <h2>Правка</h2>
        </div>
        <div class="group g-obj">
          <div class="body"><button class="big w64"><svg class="objico"><use href="#objects" /></svg><span>Объекты</span><svg class="drop"><use href="#tri" /></svg></button></div>
        </div>
        <div class="group g-model">
          <div class="body"><button class="big w140"><svg class="s40"><use href="#books" /></svg><span>Менеджер<br />библиотеки классов</span></button></div>
          <h2>Модель</h2>
        </div>
      </section>

      <main class="work">
        <aside class="dock">
          <header class="pane-head">
            <h2>Библиотека классов</h2>
            <button aria-label="Меню"><svg class="s12"><use href="#tri" /></svg></button>
            <button aria-label="Закрепить"><svg class="s12"><use href="#pin" /></svg></button>
            <button aria-label="Закрыть"><svg class="s12"><use href="#x" /></svg></button>
          </header>
          <ul class="tree">
            <li v-for="(n, i) in tree" :key="i">
              <span v-for="(c, k) in n.cells" :key="k" class="cell" :class="{ own: c.own, through: c.through }">
                <button v-if="c.own && n.state" class="exp" :class="n.state" :aria-label="n.label"></button>
              </span>
              <svg class="s16"><use :href="'#' + n.icon" /></svg>
              <span class="name" :class="{ sel: n.selected }">{{ n.label }}</span>
            </li>
          </ul>
        </aside>

        <section class="center">
          <header class="pane-head">
            <h2>Панель объектов</h2>
            <button aria-label="Меню"><svg class="s12"><use href="#tri" /></svg></button>
            <button aria-label="Закрепить"><svg class="s12"><use href="#pin" /></svg></button>
            <button aria-label="Закрыть"><svg class="s12"><use href="#x" /></svg></button>
          </header>
          <div class="toolbox">
            <nav class="tool-tabs"><button v-for="t in toolTabs" :key="t.label" :class="t.cls">{{ t.label }}</button></nav>
            <div class="tools">
              <button v-for="(t, i) in tools" :key="t" :class="{ on: i === 0 }" :aria-label="t"><svg class="s32"><use :href="'#' + t" /></svg></button>
            </div>
          </div>

          <div class="mdi">
            <article class="window">
              <header>
                <svg class="frameico"><use href="#frame" /></svg>
                <h3>.Models.День2.Model2_4</h3>
                <button aria-label="Свернуть"><svg class="s12"><use href="#min" /></svg></button>
                <button aria-label="Развернуть"><svg class="s12"><use href="#max" /></svg></button>
                <button aria-label="Закрыть"><svg class="s12"><use href="#x" /></svg></button>
              </header>
              <div class="canvas">
                <svg class="grid">
                  <pattern id="dots" x="21" y="21" width="20" height="20" patternUnits="userSpaceOnUse"><rect width="1" height="1" fill="#222" /></pattern>
                  <rect width="100%" height="100%" fill="url(#dots)" />
                </svg>
                <div v-for="n in plant" :key="n.name">
                  <span class="tag" :style="{ left: n.lx + 'px', top: n.ly + 'px' }">{{ n.name }}</span>
                  <svg class="obj" :style="{ left: n.x + 'px', top: n.y + 'px', width: n.w + 'px', height: n.h + 'px' }"><use :href="'#' + n.icon" /></svg>
                </div>
                <svg class="grid">
                  <g fill="none" stroke="#4c5cb4">
                    <path d="M76 201.500H146M176 201.500H182L261 121.500H266M182 201.500L261 301.500H266M296 121.500H410M296 301.500H410" />
                    <path d="M105 197l5 4.500-5 4.500M215 161h6v6M215 251.500h6v-6M375 117l5 4.500-5 4.500M375 297l5 4.500-5 4.500" />
                  </g>
                  <path d="M76 201.500h6M140 201.500h6M176 201.500h6M261 121.500h5M261 301.500h5M296 121.500h6M296 301.500h6" stroke="#111" />
                </svg>
                <div class="picked"><svg class="pickedico"><use href="#wp-down" /></svg><span>Workplace1</span></div>
                <svg class="transfer"><use href="#transgray" /></svg>
              </div>
            </article>

            <div class="minibar">
              <button aria-label="Оригинал"><svg class="s20"><use href="#house-s" /></svg></button>
              <button aria-label="Класс"><svg class="s20"><use href="#class-s" /></svg></button>
              <button aria-label="Вырезать"><svg class="s20"><use href="#cut" /></svg></button>
              <button aria-label="Копировать"><svg class="s20"><use href="#copy" /></svg></button>
              <button aria-label="Удалить"><svg class="s20"><use href="#del" /></svg></button>
            </div>
            <div class="menu" role="menu">
              <template v-for="(m, i) in menu" :key="i">
                <button v-if="m.label" role="menuitem" :class="{ active: m.active }">
                  <span class="mi"><svg v-if="m.icon" class="s20"><use :href="'#' + (m.icon === 'panel' ? 'panel-s' : m.icon)" /></svg></span>
                  <span class="mt">{{ m.label }}</span>
                  <kbd v-if="m.keys">{{ m.keys }}</kbd>
                  <svg v-if="m.sub" class="sub" viewBox="0 0 6 10"><path d="M0 0l6 5-6 5z" fill="#222" /></svg>
                </button>
                <hr v-else />
              </template>
            </div>
            <svg class="cursor" viewBox="0 0 14 20"><path d="M1 1v15l3.500-3.500L7 18.500l2.500-1L7 12h5z" fill="#fff" stroke="#333" /></svg>
          </div>

          <div class="doc-tabs">
            <svg class="notch" viewBox="0 0 20 12"><path d="M0 0h20L10 12z" fill="#fff" /><path d="M0 .500l10 10.500L20 .500" fill="none" stroke="#aaa" /></svg>
            <button class="doc"><svg class="frameico"><use href="#frame" /></svg>.Models.День2.Model2_4<svg class="s12"><use href="#x" /></svg></button>
            <div class="doc-nav">
              <button aria-label="Назад"><svg class="s12" viewBox="0 0 12 12"><path d="M9 1v10L3 6z" fill="none" stroke="#567" /></svg></button>
              <button aria-label="Вперёд"><svg class="s12" viewBox="0 0 12 12"><path d="M3 1v10l6-5z" fill="none" stroke="#567" /></svg></button>
            </div>
          </div>
        </section>
      </main>

      <footer class="status">
        <span class="msg">Открыть объект.</span>
        <span class="time">0.0000</span>
        <span class="locks"><span>OVR</span><span>CAP</span><span>NUM</span><span>SCRL</span></span>
      </footer>
    </div>

    <aside class="taskbar">
      <nav class="tasks">
        <button v-for="t in tasks" :key="t.icon + t.title" :class="{ wide: t.label, active: t.active, mark: t.mark }" :aria-label="t.title">
          <svg :class="t.size"><use :href="'#' + t.icon" /></svg><span v-if="t.label">{{ t.label }}</span>
        </button>
      </nav>
      <div class="hscroll">
        <button aria-label="Влево"><svg class="s12" viewBox="0 0 12 12"><path d="M8 2L4 6l4 4" fill="none" stroke="#444" stroke-width="2" /></svg></button>
        <i></i>
        <button aria-label="Вправо"><svg class="s12" viewBox="0 0 12 12"><path d="M4 2l4 4-4 4" fill="none" stroke="#444" stroke-width="2" /></svg></button>
      </div>
      <div class="battery"><span>100%</span><i></i></div>
      <button class="expand" aria-label="Показать скрытые значки"><svg class="s16" viewBox="0 0 16 16"><path d="M12 1L5 8l7 7" fill="none" stroke="#ddd" stroke-width="1.500" /></svg></button>
      <div class="tray"><button v-for="t in tray" :key="t" :aria-label="t"><svg class="s20"><use :href="'#' + t" /></svg></button></div>
      <button class="lang">ENG</button>
      <div class="clock"><span>15:30</span><span>вторник</span><span>02.10.2018</span></div>
      <button class="notice" aria-label="Уведомления"><svg class="s20" viewBox="0 0 20 20"><path d="M.500 1.500h19v15h-7L10 19l-2.500-2.500h-7z" fill="none" stroke="#eee" stroke-width="1.500" /></svg></button>
    </aside>
  </div>
</template>

<style>
body { margin: 0; overflow: hidden; }
</style>

<style scoped>
.desktop { display: flex; height: 100vh; font-family: "Noto Sans", "Open Sans", sans-serif; font-size: 13px; line-height: 15px; color: #333; background: #fff; }
.desktop * { box-sizing: border-box; }
svg { display: block; flex: none; }
.defs { display: none; }
button { font: inherit; color: inherit; background: none; border: 0; padding: 0; display: flex; align-items: center; justify-content: center; white-space: nowrap; }
h1, h2, h3 { margin: 0; font-size: 13px; font-weight: 400; white-space: nowrap; }
.s10 { width: 10px; height: 10px; }
.s12 { width: 12px; height: 12px; }
.s16 { width: 16px; height: 16px; }
.s20 { width: 20px; height: 20px; }
.s28 { width: 28px; height: 28px; }
.s30 { width: 30px; height: 30px; }
.s32 { width: 32px; height: 32px; }
.s36 { width: 36px; height: 38px; margin-bottom: 2px; }
.s40 { width: 40px; height: 40px; }
.pic { width: 20px; height: 16px; }
.app { flex: 1; min-width: 0; display: flex; flex-direction: column; }

.titlebar { display: flex; height: 31px; align-items: center; }
.quick { display: flex; align-items: center; width: 435px; padding-left: 3px; gap: 7px; }
.tx { font-weight: 800; font-size: 24px; line-height: 28px; color: #8b919a; margin-right: 4px; }
.customize { border-top: 1px solid #666; height: 8px; }
.context-tab { width: 335px; height: 31px; padding-left: 10px; border: 1px solid #64b496; border-top: 5px solid #50bc8c; border-bottom: 0; text-align: center; line-height: 22px; color: #4c6c62; }
.titlebar h1 { flex: 1; min-width: 0; padding-left: 18px; line-height: 20px; color: #222; }
.brand { font-weight: 800; font-size: 21px; line-height: 24px; color: #12a08e; margin-left: 4px; }
.winbtns { display: flex; padding-left: 4px; color: #444; }
.winbtns button { width: 46px; height: 30px; }

.ribbon-tabs { display: flex; height: 37px; background: #dcdcdc; padding-top: 2px; color: #444; }
.ribbon-tabs .file { width: 92px; background: #60a8b7; color: #fff; }
.ribbon-tabs .home { width: 173px; background: #fff; color: #1f6e80; }
.w56 { width: 56px; } .w60 { width: 60px; } .w64 { width: 64px; } .w72 { width: 72px; } .w74 { width: 74px; }
.w84 { width: 84px; } .w90 { width: 90px; } .w94 { width: 94px; } .w97 { width: 97px; } .w100 { width: 100px; } .w104 { width: 104px; }
.w114 { width: 114px; } .w140 { width: 140px; } .w164 { width: 164px; }
.search { display: flex; align-items: center; width: 250px; height: 33px; margin: 1px 0 0 19px; background: #fff; border: 1px solid #999; padding-left: 7px; }
.bulb { width: 16px; height: 18px; }
.search input { flex: 1; min-width: 0; border: 0; outline: 0; padding: 0 0 0 15px; font: inherit; background: none; }
.search input::placeholder { color: #777; opacity: 1; }
.ribbon-side { display: flex; align-items: center; margin-left: auto; gap: 7px; padding: 0 5px 4px 0; }

.ribbon { display: flex; height: 115px; padding-top: 4px; background: #fff; }
.group { display: flex; flex-direction: column; height: 108px; border-right: 1px solid #a8a8a8; }
.group h2 { text-align: center; color: #4aa3c4; line-height: 24px; height: 24px; }
.body { display: flex; height: 84px; padding-top: 2px; }
.g-events { width: 233px; } .g-anim { width: 89px; } .g-nav { width: 284px; padding: 0 3px; } .g-edit { width: 274px; padding-left: 4px; } .g-obj { width: 65px; padding-left: 1px; } .g-model { width: 142px; }
.big { flex-direction: column; justify-content: flex-start; color: #222; height: 78px; }
.big span { margin-top: 7px; line-height: 15px; text-align: center; }
.watch { width: 36px; height: 40px; }
.objico { width: 30px; height: 30px; margin-bottom: 10px; }
.drop { width: 12px; height: 10px; margin-top: 5px; color: #555; }
.pale { color: #bbb; }
.vline { width: 1px; height: 80px; background: #bbb; flex: none; }
.player { display: flex; flex-direction: column; padding-left: 9px; }
.prow { display: flex; align-items: center; height: 29px; gap: 8px; }
.vshort { width: 1px; height: 25px; background: #bbb; margin: 0 -2px; }
.slider { display: flex; align-items: center; height: 24px; font-size: 20px; font-weight: 600; color: #111; }
.slider button { width: 20px; height: 20px; }
.slider input { appearance: none; width: 90px; height: 22px; margin: 0 6px; background: linear-gradient(#aaa, #aaa) center / 100% 1px no-repeat; }
.slider input::-webkit-slider-thumb { appearance: none; width: 6px; height: 22px; background: #fff; border: 1px solid #999; }
.stack { flex-direction: column; align-items: flex-start; padding: 0 4px 0 6px; }
.toggle { height: 26px; background: #cfe5e8; padding: 0 2px 0 4px; gap: 5px; }
.minis { display: flex; flex-direction: column; width: 28px; gap: 6px; align-items: center; }
.minis.wide { width: 36px; }

.work { flex: 1; min-height: 0; display: flex; background: #f0f0f0; }
.pane-head { display: flex; align-items: center; height: 29px; padding: 0 6px 0 4px; background: #efefef; color: #555; gap: 11px; flex: none; }
.pane-head h2 { flex: 1; color: #333; }
.dock { width: 232px; display: flex; flex-direction: column; border-right: 1px solid #aaa; margin-right: 7px; }
.tree { flex: 1; margin: 0; padding: 0; list-style: none; background: #fff; border-top: 1px solid #777; border-left: 1px solid #777; overflow: hidden; font-size: 14px; }
.tree li { display: flex; align-items: center; height: 22px; white-space: nowrap; }
.tree li > svg { margin: 0 3px 0 2px; }
.cell { position: relative; width: 22px; height: 22px; flex: none; }
.cell.through::before, .cell.own::before { content: ""; position: absolute; left: 11px; top: 0; height: 11px; border-left: 1px dotted #888; }
.cell.through::before { height: 22px; }
.cell.own::after { content: ""; position: absolute; left: 11px; top: 11px; width: 13px; border-top: 1px dotted #888; }
.exp { position: absolute; z-index: 1; left: 6px; top: 6px; width: 11px; height: 11px; border: 1px solid #999; background: linear-gradient(#446, #446) center / 7px 1px no-repeat, #fff; }
.exp.closed { background: linear-gradient(#446, #446) center / 7px 1px no-repeat, linear-gradient(#446, #446) center / 1px 7px no-repeat, #fff; }
.name { padding: 2px 3px; }
.name.sel { background: #f0f0f0; }

.center { flex: 1; min-width: 0; display: flex; flex-direction: column; }
.toolbox { flex: none; height: 84px; margin-left: 1px; background: #fff; border-bottom: 1px solid #999; }
.tool-tabs { display: flex; height: 28px; align-items: flex-end; padding-bottom: 2px; border-bottom: 1px solid #ddd; }
.tool-tabs button { height: 23px; border-right: 2px solid #777; border-top: 1px solid #ddd; }
.tool-tabs .w60 { width: 61px; }
.tool-tabs .current { height: 25px; color: #2e7c8a; }
.tools { display: flex; padding-left: 1px; }
.tools button { width: 39px; height: 37px; }
.tools .on { background: #cce8ff; border: 1px solid #a8d4f8; }

.mdi { position: relative; flex: 1; min-height: 0; margin: 11px 7px 6px 4px; background: #adadad; border-top: 1px solid #888; border-left: 1px solid #777; }
.window { position: absolute; left: 2px; top: 1px; width: 1012px; height: 464px; display: flex; flex-direction: column; background: #60a8b7; padding: 0 9px 9px 11px; }
.window header { display: flex; align-items: center; height: 39px; padding: 8px 9px 0 0; color: #fff; gap: 20px; }
.window h3 { flex: 1; margin-left: -12px; }
.frameico { width: 20px; height: 16px; }
.canvas { position: relative; flex: 1; background: #fff; overflow: hidden; border-top: 1px solid #666; }
.grid { position: absolute; inset: 0; width: 100%; height: 100%; }
.tag { position: absolute; font-family: "DejaVu Sans Condensed", "DejaVu Sans", sans-serif; font-stretch: condensed; font-size: 11px; line-height: 13px; background: #fff; color: #333; white-space: nowrap; }
.obj { position: absolute; }
.picked { position: absolute; left: 390px; top: 30px; color: #e8f8fa; font-size: 11px; line-height: 12px; }
.picked span { display: block; background: #80b8c2; }
.pickedico { width: 20px; height: 24px; background: #a4ccd4; opacity: .8; }
.transfer { position: absolute; left: 646px; top: 26px; width: 30px; height: 30px; }
.minibar { position: absolute; left: 416px; top: 28px; display: flex; padding: 7px 7px 12px 4px; gap: 7px; background: #fff; border: 1px solid #ccc; box-shadow: 2px 2px 2px #aaa; }
.menu { position: absolute; left: 416px; top: 82px; width: 333px; padding: 0 2px 2px; background: #fff; border: 1px solid #aaa; box-shadow: 2px 2px 2px #aaa; }
.menu button { width: 100%; height: 24px; justify-content: flex-start; padding-right: 14px; color: #333; }
.menu .active { background: #b4dadf; font-weight: 700; color: #222; }
.mi { width: 33px; padding-left: 2px; }
.mt { flex: 1; text-align: left; }
.menu kbd { font: inherit; }
.sub { width: 6px; height: 10px; margin-right: -10px; }
.menu hr { height: 1px; margin: 4px 3px 3px 33px; border: 0; background: #aaa; }
.cursor { position: absolute; left: 498px; top: 74px; width: 14px; height: 20px; }

.doc-tabs { position: relative; display: flex; flex: none; height: 51px; padding: 12px 7px 0 6px; margin-left: -1px; background: linear-gradient(#aaa, #aaa) 0 12px / 100% 1px no-repeat, #fff; }
.notch { position: absolute; left: 110px; top: 12px; width: 20px; height: 12px; }
.doc { align-self: flex-start; height: 37px; margin-top: 1px; width: 226px; justify-content: flex-start; gap: 3px; padding: 10px 5px 0 3px; border-bottom: 4px solid #55b88c; font-weight: 700; font-size: 14px; color: #111; }
.doc .s12 { margin-left: auto; }
.doc-nav { display: flex; gap: 3px; margin: 17px 0 0 auto; }
.doc-nav button { width: 17px; height: 17px; background: #d3e7e9; }

.status { display: flex; align-items: center; height: 25px; background: #60a8b7; color: #e8f8fc; padding: 3px 1px 0 6px; }
.msg { flex: 1; }
.time { width: 193px; }
.locks { display: flex; gap: 6px; color: #9edbe8; }
.time, .locks { font-size: 14px; }

.taskbar { width: 128px; flex: none; display: flex; flex-direction: column; align-items: center; background: #030d06; color: #f0f0f0; font-size: 14px; }
.tasks { width: 100%; height: 564px; flex: none; }
.tasks button { width: 100%; height: 59px; gap: 5px; }
.tasks button:first-child { height: 54px; padding-bottom: 4px; }
.tasks .wide { justify-content: flex-start; padding-left: 13px; }
.tasks .mark { background: linear-gradient(#76a8d8, #76a8d8) right center / 4px 48px no-repeat; }
.tasks .active { background: linear-gradient(#76a8d8, #76a8d8) right center / 4px 100% no-repeat, #363f38; }
.hscroll { display: flex; width: 100%; height: 21px; justify-content: space-between; align-items: center; background: #f2f2f2; padding: 0 4px; }
.hscroll i { width: 43px; height: 19px; background: #cdcdcd; margin: 0 44px 0 5px; }
.battery { display: flex; align-items: center; height: 24px; margin-top: 7px; line-height: 22px; }
.battery span { width: 73px; border: 1px solid #fff; text-align: center; font-size: 16px; }
.battery i { width: 3px; height: 14px; border: 1px solid #fff; border-left: 0; }
.expand { align-self: flex-start; margin: 7px 0 12px 12px; }
.tray { display: grid; grid-template-columns: repeat(4, 30px); row-gap: 10px; justify-items: center; margin-left: 4px; }
.lang { margin-top: 19px; height: 15px; }
.clock { display: flex; flex-direction: column; text-align: center; line-height: 22px; margin-top: 30px; }
.notice { margin-top: 23px; }
</style>
